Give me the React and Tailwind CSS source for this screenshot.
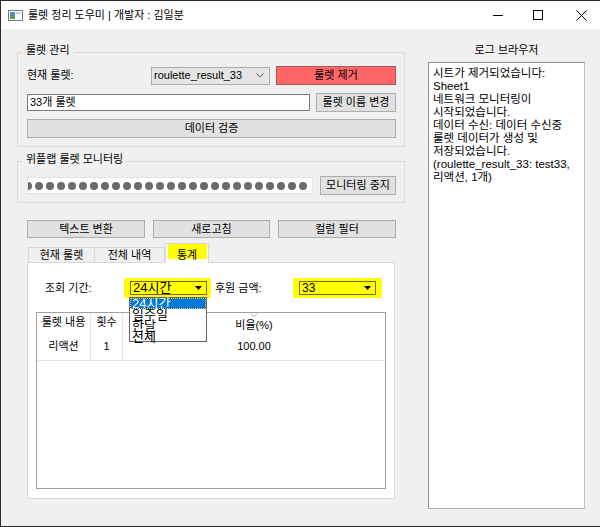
import React from "react";

const font = "font-['Liberation_Sans','Noto_Sans_CJK_KR',sans-serif]";

const Btn = ({ className = "", children }) => (
  <div
    className={`flex items-center justify-center bg-[#e1e1e1] border border-[#adadad] text-[11px] leading-[13px] text-black ${className}`}
  >
    {children}
  </div>
);

const logLines = [
  "시트가 제거되었습니다:",
  "Sheet1",
  "네트워크 모니터링이",
  "시작되었습니다.",
  "데이터 수신: 데이터 수신중",
  "룰렛 데이터가 생성 및",
  "저장되었습니다.",
  "(roulette_result_33: test33,",
  "리액션, 1개)",
];

const periods = ["24시간", "일주일", "한달", "전체"];

const AppIcon = () => (
  <svg width="15" height="11" viewBox="0 0 15 11">
    <rect x="0.5" y="0.5" width="14" height="10" fill="#fff" stroke="#6f7b86" />
    <rect x="2" y="2" width="5" height="7" fill="#4f8fb5" />
    <rect x="2" y="6" width="5" height="3" fill="#5f9a5a" />
    <rect x="8" y="2" width="5" height="2" fill="#c9d3dc" />
  </svg>
);

const Arrow = () => (
  <svg width="7" height="4" viewBox="0 0 7 4" className="shrink-0">
    <path d="M0 0h7L3.5 4z" fill="#000" />
  </svg>
);

export default function App() {
  return (
    <div
      className={`w-[600px] h-[527px] bg-[#f0f0f0] border-l border-t border-b border-[#2b2b2b] flex flex-col overflow-hidden ${font}`}
    >
      {/* Title bar */}
      <div className="h-[28px] bg-white flex items-center shrink-0">
        <div className="ml-[7px]">
          <AppIcon />
        </div>
        <span className="ml-[5px] text-[11px] leading-[14px] text-black">
          룰렛 정리 도우미 | 개발자 : 김일분
        </span>
        <div className="flex-1" />
        <svg width="10" height="10" viewBox="0 0 10 10" className="mr-[30px]">
          <path d="M0 5.5h10" stroke="#000" strokeWidth="1" />
        </svg>
        <svg width="10" height="10" viewBox="0 0 10 10" className="mr-[33px]">
          <rect x="0.5" y="0.5" width="9" height="9" fill="none" stroke="#000" />
        </svg>
        <svg width="11" height="11" viewBox="0 0 11 11" className="mr-[13px]">
          <path d="M0.5 0.5l10 10M10.5 0.5l-10 10" stroke="#000" strokeWidth="1" />
        </svg>
      </div>

      <div className="flex flex-1">
        {/* Left column */}
        <div className="ml-[16px] w-[388px] flex flex-col">
          {/* 룰렛 관리 */}
          <fieldset className="mt-[14px] border border-[#dcdcdc] pl-[9px] pr-[8px] pt-[5px] pb-[8px]">
            <legend className="ml-[-5px] px-[4px] pb-[4px] text-[11px] leading-[14px] text-black">
              룰렛 관리
            </legend>
            <div className="flex items-center h-[19px]">
              <span className="flex-1 text-[11px] leading-[13px] text-black">현재 룰렛:</span>
              <div className="w-[119px] h-[18px] bg-[#e5e5e5] border border-[#acacac] flex items-center pl-[2px] pr-[5px]">
                <span className="flex-1 text-[11px] leading-[13px] text-black">roulette_result_33</span>
                <svg width="8" height="5" viewBox="0 0 8 5">
                  <path d="M0.5 0.5L4 4l3.5-3.5" fill="none" stroke="#606060" />
                </svg>
              </div>
              <Btn className="ml-[6px] w-[120px] h-[19px] !bg-[#ff6666] !border-[#a85a5a]">룰렛 제거</Btn>
            </div>
            <div className="flex items-center mt-[8px] h-[19px]">
              <div className="w-[283px] h-[17px] bg-white border border-[#7a7a7a] flex items-center pl-[2px] text-[11px] leading-[13px] text-black">
                33개 룰렛
              </div>
              <Btn className="ml-auto w-[80px] h-[19px]">룰렛 이름 변경</Btn>
            </div>
            <Btn className="mt-[7px] w-full h-[19px]">데이터 검증</Btn>
          </fieldset>

          {/* 위플랩 룰렛 모니터링 */}
          <fieldset className="mt-[5px] border border-[#dcdcdc] pl-[9px] pr-[8px] pt-[6px] pb-[7px]">
            <legend className="ml-[-5px] px-[4px] pb-[4px] text-[11px] leading-[14px] text-black">
              위플랩 룰렛 모니터링
            </legend>
            <div className="flex items-center h-[19px]">
              <div className="w-[286px] h-[17px] bg-white border border-[#e3e3e3] flex items-center justify-end gap-[3px] overflow-hidden pr-[5px]">
                {Array.from({ length: 30 }).map((_, i) => (
                  <div key={i} className="w-[8px] h-[8px] rounded-full bg-[#6b6b6b] shrink-0" />
                ))}
              </div>
              <Btn className="ml-auto w-[76px] h-[19px]">모니터링 중지</Btn>
            </div>
          </fieldset>

          {/* Action buttons */}
          <div className="mt-[17px] pl-[10px] flex gap-[8px]">
            <Btn className="w-[118px] h-[18px]">텍스트 변환</Btn>
            <Btn className="w-[117px] h-[18px]">새로고침</Btn>
            <Btn className="w-[118px] h-[18px]">컬럼 필터</Btn>
          </div>

          {/* Tabs */}
          <div className="mt-[5px] pl-[11px] h-[19px] flex items-end">
            <div className="w-[67px] h-[15px] bg-[#f0f0f0] border border-b-0 border-[#d9d9d9] text-center text-[11px] leading-[14px] text-black">
              현재 룰렛
            </div>
            <div className="w-[70px] h-[15px] bg-[#f0f0f0] border border-l-0 border-b-0 border-[#d9d9d9] text-center text-[11px] leading-[14px] text-black">
              전체 내역
            </div>
            <div className="relative z-10 w-[44px] h-[20px] -mb-px bg-white border border-b-0 border-[#d9d9d9] flex justify-center">
              <div className="w-[39px] h-[15px] bg-[#ffff00] rounded-[2px] text-center text-[11px] leading-[14px] pt-[4px] text-black">
                통계
              </div>
            </div>
          </div>

          {/* Tab panel */}
          <div className="ml-[10px] w-[368px] h-[237px] bg-white border border-[#d9d9d9] pl-[8px] pt-[15px]">
            <div className="flex items-center h-[20px]">
              <div className="w-[88px] pl-[9px] text-[11px] leading-[13px] text-black">조회 기간:</div>
              <div className="relative w-[87px] h-[20px] bg-[#ffff00] rounded-[2px] flex items-center pl-[6px]">
                <div className="w-[77px] h-[14px] border border-[#6e6e1e] flex items-center pl-[2px] pr-[4px]">
                  <span className="flex-1 text-[13px] leading-[12px] text-black">24시간</span>
                  <Arrow />
                </div>
                {/* open dropdown list */}
                <div className="absolute left-[5px] top-[19px] z-20 w-[78px] h-[45px] bg-white border border-[#646464]">
                  {periods.map((p, i) => (
                    <div
                      key={p}
                      className={
                        i === 0
                          ? "h-[11px] pl-[2px] text-[13px] leading-[11px] bg-[#0078d7] text-white outline outline-1 outline-dotted outline-[#f0c060] -outline-offset-1"
                          : "h-[11px] pl-[2px] text-[13px] leading-[11px] text-black"
                      }
                    >
                      {p}
                    </div>
                  ))}
                </div>
              </div>
              <div className="ml-[4px] w-[78px] text-[11px] leading-[13px] text-black">후원 금액:</div>
              <div className="w-[89px] h-[20px] bg-[#ffff00] rounded-[2px] flex items-center pl-[6px]">
                <div className="w-[77px] h-[14px] border border-[#6e6e1e] flex items-center pl-[2px] pr-[4px]">
                  <span className="flex-1 text-[12px] leading-[12px] text-black">33</span>
                  <Arrow />
                </div>
              </div>
            </div>

            {/* Table */}
            <div className="mt-[14px] w-[350px] h-[177px] border border-[#a0a0a0] bg-white">
              <div className="grid grid-cols-[54px_32px_1fr] border-b border-[#e5e5e5] text-[11px] leading-[13px] text-black">
                <div className="h-[19px] border-r border-[#e5e5e5] flex items-end justify-center pb-[3px]">룰렛 내용</div>
                <div className="h-[19px] border-r border-[#e5e5e5] flex items-end justify-center pb-[3px]">횟수</div>
                <div className="h-[19px] flex flex-col items-center">
                  <svg width="8" height="4" viewBox="0 0 8 4">
                    <path d="M0.5 0.5L4 3.5l3.5-3" fill="none" stroke="#b0b0b0" />
                  </svg>
                  <span className="mt-[2px]">비율(%)</span>
                </div>
                <div className="h-[28px] border-r border-[#e5e5e5] flex justify-center pt-[8px]">리액션</div>
                <div className="h-[28px] border-r border-[#e5e5e5] flex justify-center pt-[8px]">1</div>
                <div className="h-[28px] flex justify-center pt-[8px]">100.00</div>
              </div>
            </div>
          </div>
        </div>

        {/* Right column: log browser */}
        <div className="ml-[23px] w-[157px] flex flex-col">
          <div className="mt-[14px] text-center text-[11px] leading-[14px] text-black">로그 브라우저</div>
          <div className="mt-[5px] h-[447px] bg-white border border-[#8f8f8f] border-b-[#adadad] border-r-[#c4c4c4] pl-[4px] pt-[4px]">
            {logLines.map((l) => (
              <div key={l} className="text-[11.5px] leading-[13px] text-black whitespace-nowrap">
                {l}
              </div>
            ))}
          </div>
        </div>
      </div>
    </div>
  );
}
